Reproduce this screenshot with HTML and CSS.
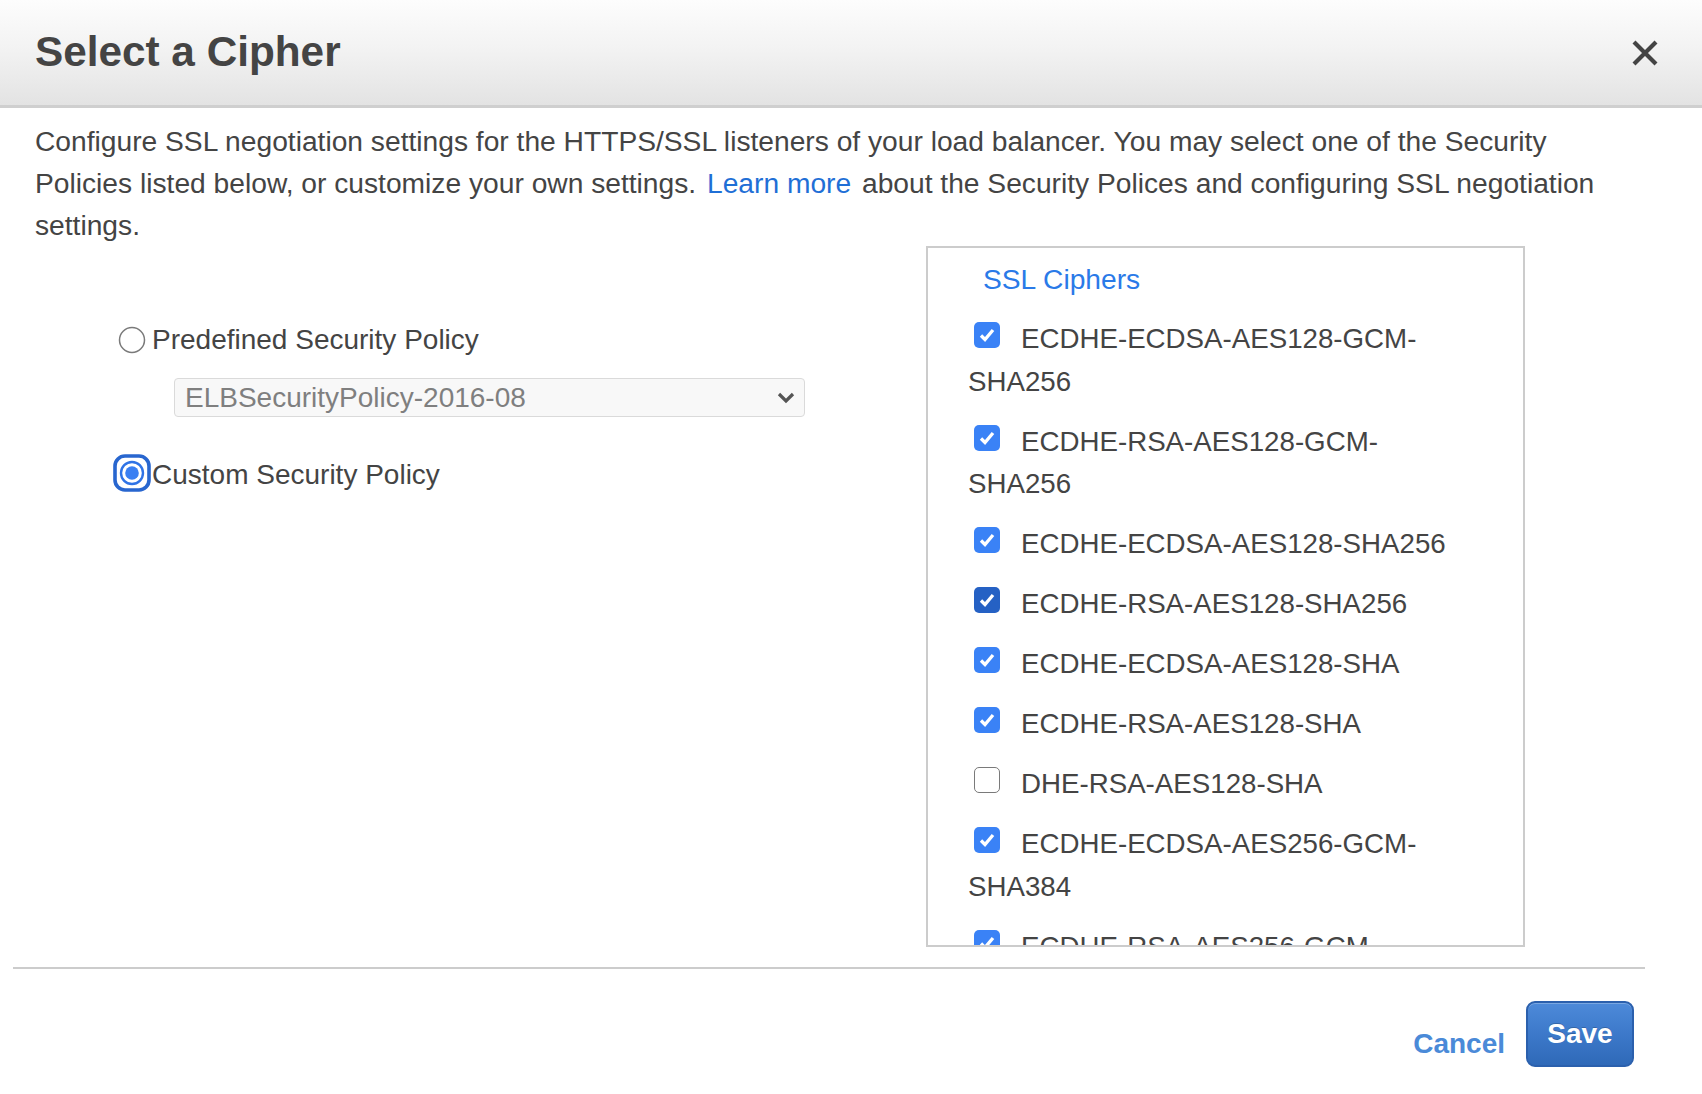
FILE: index.html
```html
<!DOCTYPE html>
<html lang="en">
<head>
<meta charset="utf-8">
<title>Select a Cipher</title>
<link rel="stylesheet" href="styles.css">
</head>
<body>
<div class="modal">
  <div class="modal-header">
    <h1 class="modal-title">Select a Cipher</h1>
    <span class="close-btn" aria-label="Close">
      <svg width="28" height="28" viewBox="0 0 28 28"><path d="M3 3 L25 25 M25 3 L3 25" stroke="#444" stroke-width="4.2" stroke-linecap="butt" fill="none"/></svg>
    </span>
  </div>
  <p class="intro">Configure SSL negotiation settings for the HTTPS/SSL listeners of your load balancer. You may select one of the Security Policies listed below, or customize your own settings. <a class="link" href="#">Learn more</a> about the Security Polices and configuring SSL negotiation settings.</p>
  <div class="content">
    <div class="policy-col">
      <div class="radio-row">
        <svg class="radio" width="38" height="38" viewBox="0 0 38 38"><circle cx="19" cy="19" r="12.5" fill="#fff" stroke="#7a7a7a" stroke-width="1.5"/></svg>
        <span class="radio-label">Predefined Security Policy</span>
      </div>
      <div class="fake-select">
        <span class="select-text">ELBSecurityPolicy-2016-08</span>
        <svg width="20" height="14" viewBox="0 0 20 14"><path d="M3 3 L10 10 L17 3" stroke="#555" stroke-width="3.2" fill="none"/></svg>
      </div>
      <div class="radio-row radio-row-second">
        <svg class="radio" width="38" height="38" viewBox="0 0 38 38">
          <rect x="2" y="2" width="34" height="34" rx="10" ry="10" fill="#fff" stroke="#2866cf" stroke-width="3.6"/>
          <circle cx="19" cy="19" r="11" fill="#fff" stroke="#2f73e6" stroke-width="2.4"/>
          <circle cx="19" cy="19" r="6.8" fill="#3a7ff2"/>
        </svg>
        <span class="radio-label">Custom Security Policy</span>
      </div>
    </div>
    <div class="cipher-box">
      <div class="cipher-title">SSL Ciphers</div>
      <ul class="cipher-list">
        <li class="cipher"><span class="cb on"><svg width="26" height="26" viewBox="0 0 26 26"><path d="M7 13.5 L11 17.5 L19 8" stroke="#fff" stroke-width="3.3" fill="none"/></svg></span>ECDHE-ECDSA-AES128-GCM-SHA256</li>
        <li class="cipher"><span class="cb on"><svg width="26" height="26" viewBox="0 0 26 26"><path d="M7 13.5 L11 17.5 L19 8" stroke="#fff" stroke-width="3.3" fill="none"/></svg></span>ECDHE-RSA-AES128-GCM-SHA256</li>
        <li class="cipher"><span class="cb on"><svg width="26" height="26" viewBox="0 0 26 26"><path d="M7 13.5 L11 17.5 L19 8" stroke="#fff" stroke-width="3.3" fill="none"/></svg></span>ECDHE-ECDSA-AES128-SHA256</li>
        <li class="cipher"><span class="cb on dark"><svg width="26" height="26" viewBox="0 0 26 26"><path d="M7 13.5 L11 17.5 L19 8" stroke="#fff" stroke-width="3.3" fill="none"/></svg></span>ECDHE-RSA-AES128-SHA256</li>
        <li class="cipher"><span class="cb on"><svg width="26" height="26" viewBox="0 0 26 26"><path d="M7 13.5 L11 17.5 L19 8" stroke="#fff" stroke-width="3.3" fill="none"/></svg></span>ECDHE-ECDSA-AES128-SHA</li>
        <li class="cipher"><span class="cb on"><svg width="26" height="26" viewBox="0 0 26 26"><path d="M7 13.5 L11 17.5 L19 8" stroke="#fff" stroke-width="3.3" fill="none"/></svg></span>ECDHE-RSA-AES128-SHA</li>
        <li class="cipher"><span class="cb off"></span>DHE-RSA-AES128-SHA</li>
        <li class="cipher"><span class="cb on"><svg width="26" height="26" viewBox="0 0 26 26"><path d="M7 13.5 L11 17.5 L19 8" stroke="#fff" stroke-width="3.3" fill="none"/></svg></span>ECDHE-ECDSA-AES256-GCM-SHA384</li>
        <li class="cipher"><span class="cb on"><svg width="26" height="26" viewBox="0 0 26 26"><path d="M7 13.5 L11 17.5 L19 8" stroke="#fff" stroke-width="3.3" fill="none"/></svg></span>ECDHE-RSA-AES256-GCM-SHA384</li>
        <li class="cipher"><span class="cb on"><svg width="26" height="26" viewBox="0 0 26 26"><path d="M7 13.5 L11 17.5 L19 8" stroke="#fff" stroke-width="3.3" fill="none"/></svg></span>ECDHE-ECDSA-AES256-SHA384</li>
        <li class="cipher"><span class="cb on"><svg width="26" height="26" viewBox="0 0 26 26"><path d="M7 13.5 L11 17.5 L19 8" stroke="#fff" stroke-width="3.3" fill="none"/></svg></span>ECDHE-RSA-AES256-SHA384</li>
      </ul>
    </div>
  </div>
  <div class="footer-line"></div>
  <div class="footer">
    <a class="cancel" href="#">Cancel</a>
    <button class="save" type="button">Save</button>
  </div>
</div>
</body>
</html>
```

FILE: styles.css
```css
* { box-sizing: border-box; }
html, body { margin: 0; padding: 0; background: #fff; }
body {
  font-family: "Liberation Sans", Arial, Helvetica, sans-serif;
  color: #444;
  width: 1702px;
  height: 1094px;
  overflow: hidden;
}
.modal-header {
  height: 108px;
  border-bottom: 3px solid #cfcfcf;
  background: linear-gradient(to bottom, #fdfdfd 0%, #f3f3f3 45%, #e3e3e3 100%);
  display: flex;
  align-items: center;
  justify-content: space-between;
  padding: 0 43px 0 35px;
}
.modal-title {
  margin: 0;
  font-size: 42.3px;
  line-height: 1;
  font-weight: bold;
  color: #444;
}
.close-btn { display: flex; width: 28px; height: 28px; margin-top: 1px; }
.intro {
  margin: 12px 0 0 35px;
  width: 1600px;
  font-size: 28.2px;
  line-height: 42px;
  color: #444;
}
.link { color: #1f6fd6; text-decoration: none; margin: 0 3px; }
.content {
  display: grid;
  grid-template-columns: 891px 599px;
  padding-left: 35px;
}
.policy-col { padding: 73px 0 0 78px; }
.radio-row {
  display: flex;
  align-items: center;
  height: 42px;
}
.radio { flex: none; display: block; }
.radio-label { font-size: 28px; line-height: 42px; margin-left: 1px; color: #444; }
.fake-select {
  margin: 17px 0 0 61px;
  width: 631px;
  height: 39px;
  background: #f8f8f8;
  border: 1.5px solid #dadada;
  border-radius: 4px;
  display: flex;
  align-items: center;
  justify-content: space-between;
  padding: 0 8px 0 10px;
}
.select-text { font-size: 28px; color: #7f7f7f; line-height: 36px; }
.radio-row-second { margin-top: 35px; }
.radio-row-second .radio-label { position: relative; top: 2px; }
.cipher-box {
  height: 701px;
  border: 2px solid #cccccc;
  overflow: hidden;
  padding: 10px 60px 0 40px;
}
.cipher-title {
  font-size: 28.2px;
  line-height: 42px;
  color: #2a7ae8;
  padding-left: 15px;
}
.cipher-list { list-style: none; margin: 18px 0 0 0; padding: 0; }
.cipher {
  font-size: 27.7px;
  line-height: 42.5px;
  margin-bottom: 17.5px;
  color: #444;
}
.cb {
  display: inline-block;
  width: 26px;
  height: 26px;
  margin: 0 21px 0 6px;
  border-radius: 5px;
  vertical-align: baseline;
}
.cb svg { display: block; }
.cb.on { background: #3a82f6; }
.cb.on.dark { background: #2561c4; }
.cb.off { background: #fff; border: 1.5px solid #7a7a7a; }
.footer-line {
  margin: 20px 57px 0 13px;
  height: 2px;
  background: #cccccc;
}
.footer {
  display: flex;
  justify-content: flex-end;
  align-items: flex-start;
  padding: 32px 68px 0 0;
}
.cancel {
  margin-top: 26px;
  margin-right: 21px;
  font-size: 28px;
  line-height: 34px;
  font-weight: bold;
  color: #4a8ad8;
  text-decoration: none;
}
.save {
  width: 108px;
  height: 66px;
  font-family: inherit;
  font-size: 28px;
  font-weight: bold;
  color: #fff;
  line-height: 62px;
  padding: 0;
  border: 2px solid #2b60ad;
  border-radius: 9px;
  background: linear-gradient(to bottom, #4d8ad9 0%, #3b77c8 55%, #2f69b8 100%);
  box-shadow: inset 0 1px 0 rgba(255,255,255,0.25);
  text-shadow: 0 -1px 0 rgba(0,0,0,0.2);
}
```
